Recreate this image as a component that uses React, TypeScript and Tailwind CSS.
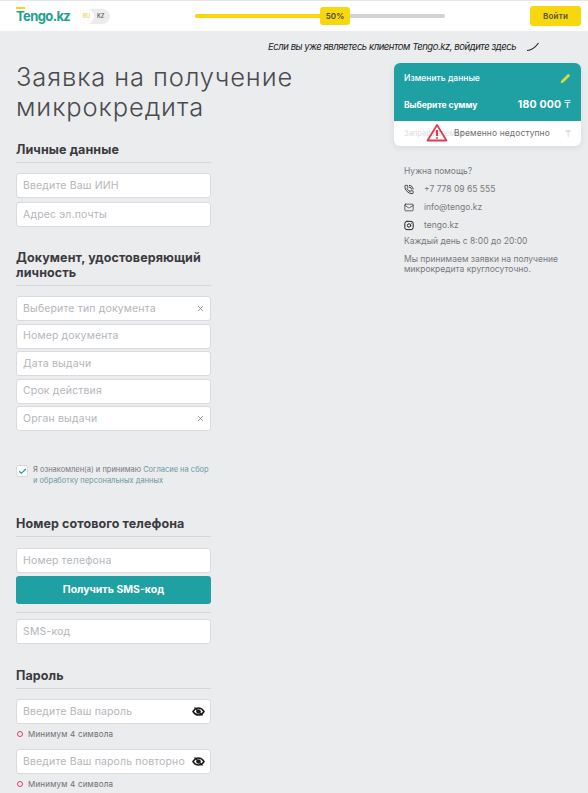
import React from 'react';
import { PhoneCall, Mail, Instagram, X, Check } from 'lucide-react';

const font = { fontFamily: 'Inter' };

const EyeOff = () => (
  <svg width="13" height="11" viewBox="0 0 13 11" fill="none" className="text-[#1c1c1c]">
    <path d="M1 5.500C2.500 3 4.300 1.900 6.500 1.900S10.500 3 12 5.500C10.500 8 8.700 9.100 6.500 9.100S2.500 8 1 5.500Z" stroke="currentColor" strokeWidth="1.500" />
    <circle cx="6.500" cy="5.500" r="2.300" fill="currentColor" />
    <path d="M2.500 1.500 10.500 9.500" stroke="currentColor" strokeWidth="1.200" />
  </svg>
);

const Field = ({ placeholder, icon, className = '' }: { placeholder: string; icon?: 'x' | 'eye'; className?: string }) => (
  <div className={`flex h-[25px] w-[195px] items-center justify-between rounded-[3px] border border-[#d9dbde] bg-white pl-[6px] pr-[5px] ${className}`}>
    <span className="whitespace-nowrap text-[10.5px] tracking-[0.15px] text-[#b4b6ba]">{placeholder}</span>
    {icon === 'x' && <X className="h-[9px] w-[9px] text-[#666]" strokeWidth={1.7} />}
    {icon === 'eye' && <EyeOff />}
  </div>
);

const Heading = ({ children, className = '' }: { children: React.ReactNode; className?: string }) => (
  <div className={`w-[195px] border-b border-[#d5d7db] pb-[5px] text-[12.5px] font-bold leading-[15px] tracking-[0.1px] text-[#3b3a40] ${className}`}>
    {children}
  </div>
);

const Hint = () => (
  <div className="flex h-[11px] items-center gap-[5px] pl-px">
    <span className="h-[6px] w-[6px] rounded-full border-[1.5px] border-[#e0405f]" />
    <span className="text-[8px] tracking-[0.2px] text-[#6d6e72]">Минимум 4 символа</span>
  </div>
);

const Logo = () => (
  <div className="relative w-[52px] text-[13px] font-bold leading-[16px] tracking-[-0.6px] text-[#22a08f]">
    <span className="absolute left-0 top-[-1px] h-[2px] w-[9px] bg-[#f6d70f]" />
    Tengo.kz
  </div>
);

const ContactRow = ({ icon, text }: { icon: React.ReactNode; text: string }) => (
  <div className="flex h-[18px] items-center gap-[10px]">
    <span className="flex w-[10px] justify-center text-[#222]">{icon}</span>
    <span className="text-[8.5px] text-[#77787c]">{text}</span>
  </div>
);

export default function App() {
  return (
    <div className="h-[793px] w-[588px] overflow-hidden bg-[#ebecee]" style={font}>
      {/* шапка */}
      <header className="flex h-[31px] items-center border-t border-[#e6e6e6] bg-white pl-4 pr-[7px]">
        <Logo />
        <div className="ml-[11px] flex h-[15px] w-[31px] items-center rounded-full bg-[#ececec] text-[5.5px] font-semibold">
          <span className="flex h-[15px] w-[15px] items-center justify-center rounded-full bg-white text-[#ecd65a]">RU</span>
          <span className="ml-[3px] text-[#666]">KZ</span>
        </div>
        <div className="relative ml-[85px] h-[4px] w-[250px] rounded-full bg-[#d2d3d6]">
          <div className="h-[4px] w-[140px] rounded-full bg-[#f8d70e]" />
          <div className="absolute left-[125px] top-[-7px] flex h-[18px] w-[30px] items-center justify-center rounded-[3px] bg-[#f8d70e] text-[8px] font-semibold text-[#4a4a3a]">50%</div>
        </div>
        <button className="ml-auto h-[20px] w-[51px] rounded-[3px] bg-[#f8d70e] text-[8px] font-semibold tracking-[0.2px] text-[#55533a]">Войти</button>
      </header>

      <div className="flex">
        <main className="w-[394px] pl-4">
          <h1 className="mt-[31px] text-[25.5px] font-light leading-[30px] tracking-[0.9px] text-[#4a4a50]">
            Заявка на получение<br />микрокредита
          </h1>

          <Heading className="mt-[20px]">Личные данные</Heading>
          <div className="mt-[10px] flex flex-col gap-[4px]">
            <Field placeholder="Введите Ваш ИИН" />
            <Field placeholder="Адрес эл.почты" />
          </div>

          <Heading className="mt-[23px]">Документ, удостоверяющий<br />личность</Heading>
          <div className="mt-[10px] flex flex-col gap-[2.5px]">
            <Field placeholder="Выберите тип документа" icon="x" />
            <Field placeholder="Номер документа" />
            <Field placeholder="Дата выдачи" />
            <Field placeholder="Срок действия" />
            <Field placeholder="Орган выдачи" icon="x" />
          </div>

          <div className="mt-[33px] flex w-[195px] gap-[5px]">
            <span className="mt-px flex h-[12px] w-[12px] shrink-0 items-center justify-center rounded-[2px] border border-[#d9dbde] bg-white">
              <Check className="h-[9px] w-[9px] text-[#1fa0a3]" strokeWidth={3} />
            </span>
            <p className="text-[7.5px] leading-[11px] text-[#77787c]">
              Я ознакомлен(а) и принимаю <span className="text-[#6d98a0]">Согласие на сбор и обработку персональных данных</span>
            </p>
          </div>

          <Heading className="mt-[30px]">Номер сотового телефона</Heading>
          <Field placeholder="Номер телефона" className="mt-[11px]" />
          <button className="mt-[3px] h-[28px] w-[195px] rounded-[3px] bg-[#1fa0a3] text-[10.5px] font-bold text-white">Получить SMS-код</button>
          <div className="mt-[8px] w-[195px] border-b border-[#d5d7db]" />
          <Field placeholder="SMS-код" className="mt-[6px]" />

          <Heading className="mt-[24px]">Пароль</Heading>
          <Field placeholder="Введите Ваш пароль" icon="eye" className="mt-[10px]" />
          <div className="mt-[4px]"><Hint /></div>
          <Field placeholder="Введите Ваш пароль повторно" icon="eye" className="mt-[10px]" />
          <div className="mt-[4px]"><Hint /></div>
        </main>

        <aside className="w-[187px]">
          <div className="-ml-[126px] flex h-[32px] items-center whitespace-nowrap text-[9.5px] italic tracking-[-0.45px] text-[#222]">
            Если вы уже являетесь клиентом Tengo.kz, войдите здесь
            <svg className="ml-[10px]" width="14" height="10" viewBox="0 0 14 10" fill="none">
              <path d="M1 8.500c4 0 7-1.500 11.500-7.500" stroke="#222" strokeWidth="1.100" />
            </svg>
          </div>
          <div className="overflow-hidden rounded-[6px] bg-white shadow-[0_2px_6px_rgba(0,0,0,0.08)]">
            <div className="h-[58px] bg-[#1fa0a3] px-[10px] text-white">
              <div className="flex h-[30px] items-center justify-between pt-[1px]">
                <span className="text-[8.5px] font-medium">Изменить данные</span>
                <svg width="11" height="11" viewBox="0 0 11 11" fill="#d6dc3a">
                  <path d="M8.200.8 10.200 2.800 3.400 9.600.7 10.300 1.400 7.600Z" />
                </svg>
              </div>
              <div className="flex items-center justify-between pt-[4px]">
                <span className="text-[8.5px] font-bold">Выберите сумму</span>
                <span className="text-[10.5px] font-bold tracking-[0.2px]">180 000 <span className="font-normal">₸</span></span>
              </div>
            </div>
            <div className="relative flex h-[25px] items-center justify-between pl-[10px] pr-[10px]">
              <span className="text-[7.5px] text-[#dcdcdc]">Запрашиваемая</span>
              <span className="text-[9px] text-[#d8d8d8]">₸</span>
              <div className="absolute left-[32px] top-0 flex h-[25px] items-center gap-[6px]">
                <svg width="22" height="19" viewBox="0 0 22 19" fill="none" className="-mt-[3px]">
                  <path d="M11 2 20.500 17.500h-19z" stroke="#e23a55" strokeWidth="1.800" strokeLinejoin="round" />
                  <path d="M11 7v6M11 14.200v1.600" stroke="#e23a55" strokeWidth="2" />
                </svg>
                <span className="text-[8.5px] tracking-[0.1px] text-[#6d6e72]">Временно недоступно</span>
              </div>
            </div>
          </div>

          <div className="pl-[10px] pt-[19px] text-[8.5px] text-[#77787c]">
            <div className="mb-[3px]">Нужна помощь?</div>
            <ContactRow icon={<PhoneCall className="h-[11px] w-[11px]" strokeWidth={2} />} text="+7 778 09 65 555" />
            <ContactRow icon={<Mail className="h-[11px] w-[11px]" strokeWidth={1.6} />} text="info@tengo.kz" />
            <ContactRow icon={<Instagram className="h-[11px] w-[11px]" strokeWidth={2.4} />} text="tengo.kz" />
            <div>Каждый день с 8:00 до 20:00</div>
            <p className="mt-[6px] leading-[10px]">Мы принимаем заявки на получение микрокредита круглосуточно.</p>
          </div>
        </aside>
      </div>
    </div>
  );
}
